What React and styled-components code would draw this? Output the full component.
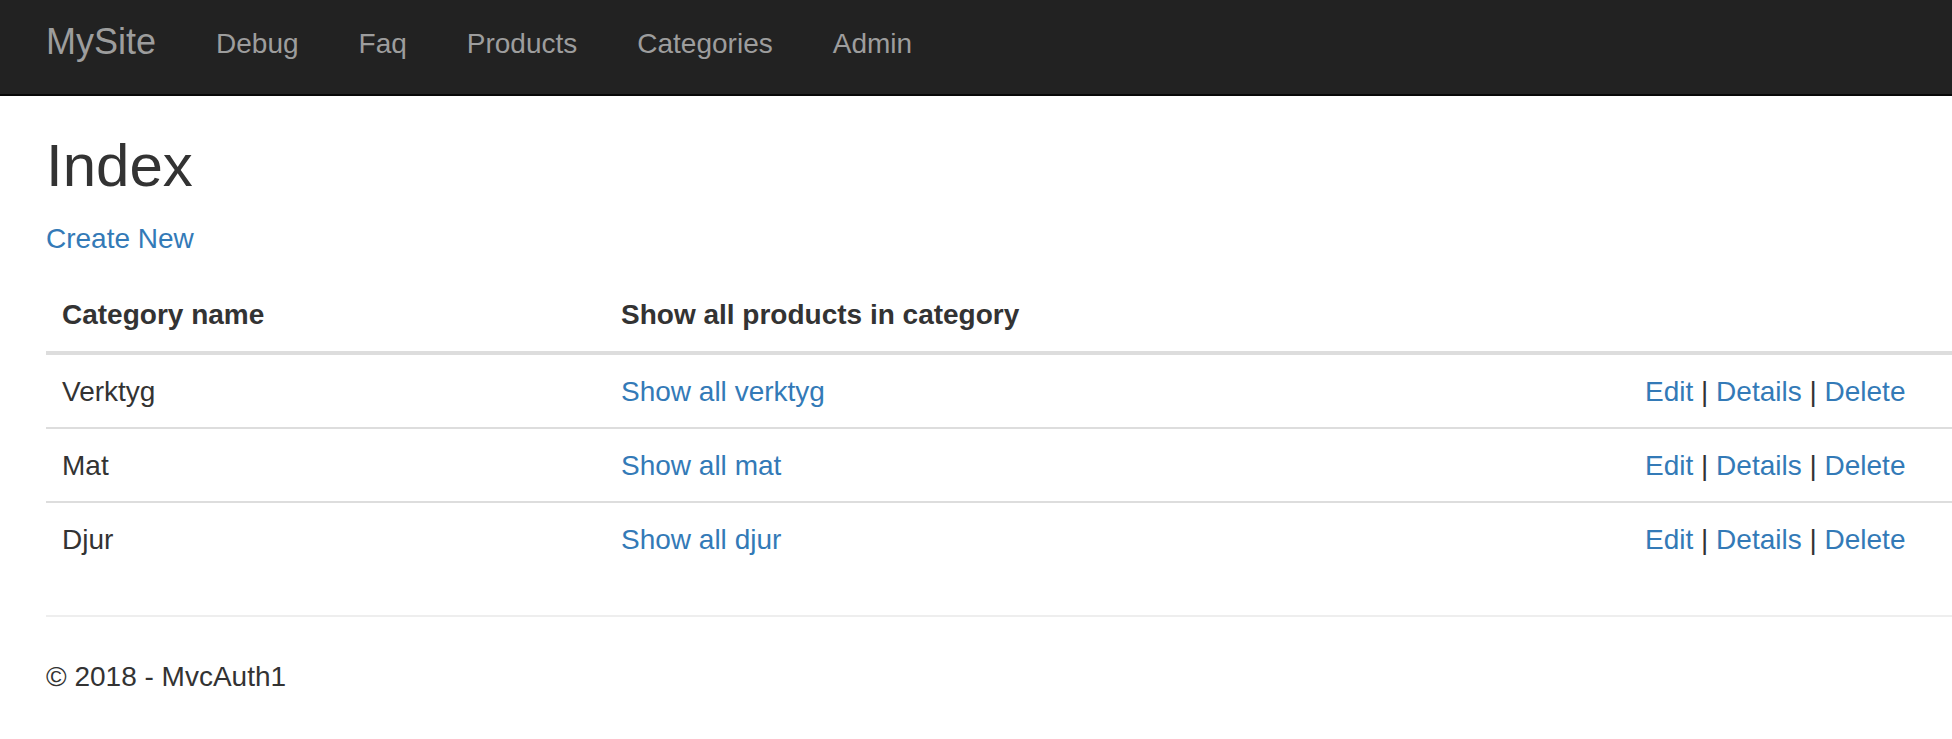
import React from "react";
import styled, { createGlobalStyle } from "styled-components";

const GlobalStyle = createGlobalStyle`
  html, body {
    margin: 0;
    padding: 0;
    background: #fff;
  }
  body {
    font-family: "Liberation Sans", Arial, Helvetica, sans-serif;
    font-size: 28px;
    line-height: 40px;
    color: #333;
    overflow: hidden;
  }
  * { box-sizing: border-box; }
`;

const NavBar = styled.nav`
  height: 96px;
  background: #222;
  border-bottom: 2px solid #080808;
  display: flex;
  align-items: flex-start;
  padding-left: 46px;
`;

const Brand = styled.a`
  font-size: 36px;
  line-height: 40px;
  padding: 22px 30px 0 0;
  color: #9d9d9d;
  text-decoration: none;
`;

const NavList = styled.ul`
  display: flex;
  list-style: none;
  margin: 0;
  padding: 0;
`;

const NavLink = styled.a`
  display: block;
  padding: 24px 30px 0;
  font-size: 28px;
  line-height: 40px;
  color: #9d9d9d;
  text-decoration: none;
`;

const Content = styled.main`
  padding-left: 46px;
`;

const Title = styled.h2`
  font-size: 60px;
  font-weight: 500;
  line-height: 66px;
  margin: 37px 0 20px;
  color: #333;
`;

const Para = styled.p`
  margin: 0 0 20px;
`;

const Link = styled.a`
  color: #337ab7;
  text-decoration: none;
`;

const Table = styled.table`
  width: 100%;
  table-layout: fixed;
  border-collapse: collapse;
  border-spacing: 0;
  margin-bottom: 40px;
`;

const Th = styled.th`
  text-align: left;
  font-weight: bold;
  vertical-align: bottom;
  padding: 16px;
  line-height: 40px;
  border-bottom: 4px solid #ddd;
`;

const Td = styled.td`
  vertical-align: top;
  padding: 17px 16px 15px;
  line-height: 40px;
  border-top: ${(p) => (p.$first ? "0" : "2px solid #ddd")};
`;

const Sep = styled.span`
  color: #333;
`;

const Rule = styled.hr`
  margin: 40px 0;
  border: 0;
  border-top: 2px solid #eee;
  height: 0;
`;

const Footer = styled.footer`
  p {
    margin: 0 0 20px;
  }
`;

const categories = [
  { name: "Verktyg", slug: "verktyg" },
  { name: "Mat", slug: "mat" },
  { name: "Djur", slug: "djur" },
];

export default function App() {
  return (
    <>
      <GlobalStyle />
      <NavBar>
        <Brand href="#">MySite</Brand>
        <NavList>
          {["Debug", "Faq", "Products", "Categories", "Admin"].map((n) => (
            <li key={n}>
              <NavLink href="#">{n}</NavLink>
            </li>
          ))}
        </NavList>
      </NavBar>
      <Content>
        <Title>Index</Title>
        <Para>
          <Link href="#">Create New</Link>
        </Para>
        <Table>
          <colgroup>
            <col style={{ width: 559 }} />
            <col style={{ width: 1024 }} />
            <col />
          </colgroup>
          <thead>
            <tr>
              <Th>Category name</Th>
              <Th>Show all products in category</Th>
              <Th></Th>
            </tr>
          </thead>
          <tbody>
            {categories.map((c, i) => (
              <tr key={c.slug}>
                <Td $first={i === 0}>{c.name}</Td>
                <Td $first={i === 0}>
                  <Link href="#">Show all {c.slug}</Link>
                </Td>
                <Td $first={i === 0}>
                  <Link href="#">Edit</Link> <Sep>|</Sep>{" "}
                  <Link href="#">Details</Link> <Sep>|</Sep>{" "}
                  <Link href="#">Delete</Link>
                </Td>
              </tr>
            ))}
          </tbody>
        </Table>
        <Rule />
        <Footer>
          <p>© 2018 - MvcAuth1</p>
        </Footer>
      </Content>
    </>
  );
}
